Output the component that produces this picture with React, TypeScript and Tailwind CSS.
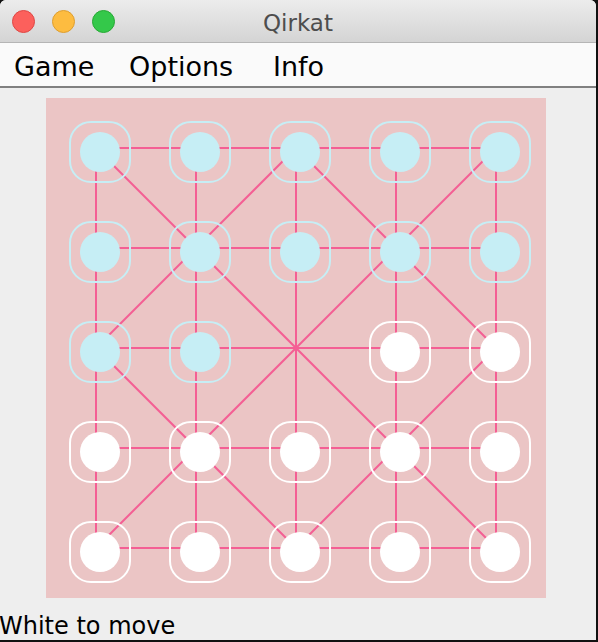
import React from "react";

const LINE = "#f45f94";
const BOARD = "#ebc5c5";
const CYAN = "#c6eef5";

function Board() {
  const pts = [0, 1, 2, 3, 4].map((i) => 50 + 100 * i);
  const lines: [number, number, number, number][] = [];
  for (const p of pts) {
    lines.push([p, 50, p, 450]);
    lines.push([50, p, 450, p]);
  }
  lines.push([50, 50, 450, 450]);
  lines.push([450, 50, 50, 450]);
  lines.push([250, 50, 50, 250]);
  lines.push([250, 50, 450, 250]);
  lines.push([50, 250, 250, 450]);
  lines.push([450, 250, 250, 450]);

  const pieces: { c: number; r: number; color: string }[] = [];
  for (let r = 0; r < 5; r++) {
    for (let c = 0; c < 5; c++) {
      let color: string | null = null;
      if (r < 2) color = CYAN;
      else if (r > 2) color = "#ffffff";
      else if (c < 2) color = CYAN;
      else if (c > 2) color = "#ffffff";
      if (color) pieces.push({ c, r, color });
    }
  }

  return (
    <svg width="500" height="500" viewBox="0 0 500 500" className="block">
      <rect x="0" y="0" width="500" height="500" fill={BOARD} />
      {lines.map(([x1, y1, x2, y2], i) => (
        <line key={i} x1={x1} y1={y1} x2={x2} y2={y2} stroke={LINE} strokeWidth={2} />
      ))}
      {pieces.map(({ c, r, color }) => {
        const cx = 54 + 100 * c;
        const cy = 54 + 100 * r;
        return (
          <g key={`${c}-${r}`}>
            <rect x={cx - 30} y={cy - 30} width={60} height={60} rx={21} ry={21} fill="none" stroke={color} strokeWidth={2} />
            <circle cx={cx} cy={cy} r={20} fill={color} />
          </g>
        );
      })}
    </svg>
  );
}

export default function App() {
  return (
    <div className="w-[598px] h-[642px] bg-[#111111] overflow-hidden" style={{ fontFamily: '"DejaVu Sans", sans-serif' }}>
      <div className="w-[596px] h-[640px] bg-[#eeeeee] rounded-t-[6px] overflow-hidden flex flex-col">
        <div className="relative h-[43px] shrink-0 bg-gradient-to-b from-[#ececec] to-[#d4d4d4] border-b border-[#b5b5b5]">
          <div className="absolute left-[12px] top-[10px] flex gap-[17px]">
            <div className="w-[23px] h-[23px] rounded-full bg-[#fc605c] border border-[#df4744]" />
            <div className="w-[23px] h-[23px] rounded-full bg-[#fdbc40] border border-[#de9e2e]" />
            <div className="w-[23px] h-[23px] rounded-full bg-[#34c84a] border border-[#27a934]" />
          </div>
          <div className="pt-[10px] text-center text-[23px] leading-[27px] text-[#4d4d4d]">Qirkat</div>
        </div>
        <div className="h-[45px] shrink-0 bg-[#fafafa] border-b-2 border-[#808080] flex items-start pt-[8px] pl-[14px] text-[27px] leading-[31px] text-black">
          <span className="w-[115px]">Game</span>
          <span className="w-[144px]">Options</span>
          <span>Info</span>
        </div>
        <div className="mt-[10px] ml-[46px]">
          <Board />
        </div>
        <div className="mt-[14px] ml-[-1px] text-[24px] leading-[28px] text-black">White to move</div>
      </div>
    </div>
  );
}
